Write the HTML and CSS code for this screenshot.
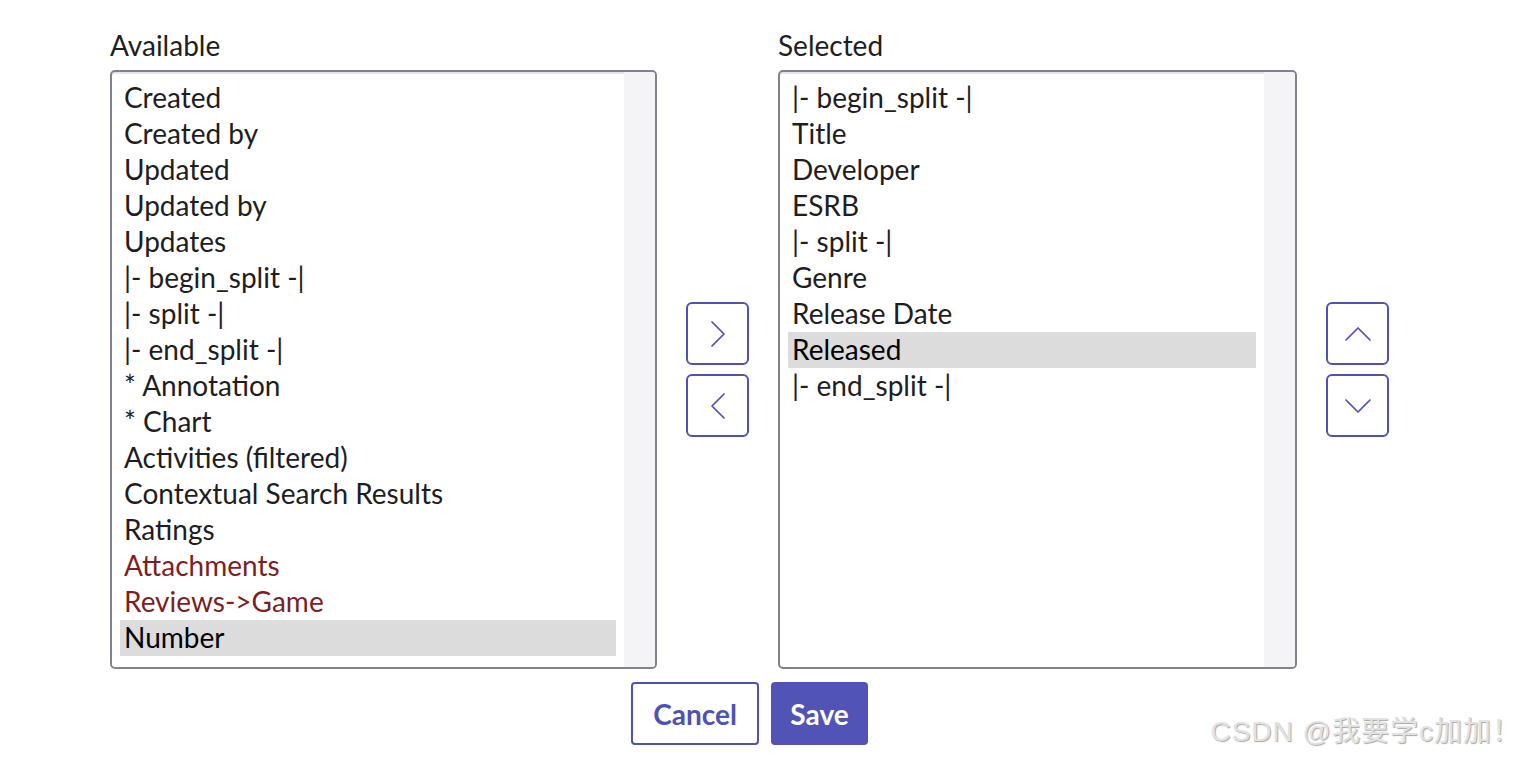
FILE: index.html
```html
<!DOCTYPE html>
<html>
<head>
<meta charset="utf-8">
<link rel="stylesheet" href="styles.css">
</head>
<body>
<div class="page">
  <div class="editor">
    <div class="column">
      <div class="label">Available</div>
      <div class="listbox">
        <div class="options">
          <div class="opt">Created</div>
          <div class="opt">Created by</div>
          <div class="opt">Updated</div>
          <div class="opt">Updated by</div>
          <div class="opt">Updates</div>
          <div class="opt">|- begin_split -|</div>
          <div class="opt">|- split -|</div>
          <div class="opt">|- end_split -|</div>
          <div class="opt">* Annotation</div>
          <div class="opt">* Chart</div>
          <div class="opt">Activities (filtered)</div>
          <div class="opt">Contextual Search Results</div>
          <div class="opt">Ratings</div>
          <div class="opt ref">Attachments</div>
          <div class="opt ref">Reviews-&gt;Game</div>
          <div class="opt sel">Number</div>
        </div>
        <div class="track"></div>
      </div>
    </div>
    <div class="arrows">
      <button class="icon-btn"><svg viewBox="0 0 30 30"><path d="M9 3l12 12-12 12" fill="none" stroke="#4f52b5" stroke-width="1.7" stroke-linecap="round" stroke-linejoin="round"/></svg></button>
      <button class="icon-btn"><svg viewBox="0 0 30 30"><path d="M21 3l-12 12 12 12" fill="none" stroke="#4f52b5" stroke-width="1.7" stroke-linecap="round" stroke-linejoin="round"/></svg></button>
    </div>
    <div class="column">
      <div class="label">Selected</div>
      <div class="listbox right">
        <div class="options">
          <div class="opt">|- begin_split -|</div>
          <div class="opt">Title</div>
          <div class="opt">Developer</div>
          <div class="opt">ESRB</div>
          <div class="opt">|- split -|</div>
          <div class="opt">Genre</div>
          <div class="opt">Release Date</div>
          <div class="opt sel">Released</div>
          <div class="opt">|- end_split -|</div>
        </div>
        <div class="track"></div>
      </div>
    </div>
    <div class="arrows">
      <button class="icon-btn"><svg viewBox="0 0 30 30"><path d="M3 21l12-12 12 12" fill="none" stroke="#4f52b5" stroke-width="1.7" stroke-linecap="round" stroke-linejoin="round"/></svg></button>
      <button class="icon-btn"><svg viewBox="0 0 30 30"><path d="M3 9l12 12 12-12" fill="none" stroke="#4f52b5" stroke-width="1.7" stroke-linecap="round" stroke-linejoin="round"/></svg></button>
    </div>
  </div>
  <div class="actions">
    <button class="btn cancel">Cancel</button>
    <button class="btn save">Save</button>
  </div>
  <div class="watermark">CSDN @我要学c加加！</div>
</div>
</body>
</html>
```

FILE: styles.css
```css
html, body {
  margin: 0;
  padding: 0;
  background: #ffffff;
}
body {
  font-family: Lato, "Noto Sans", sans-serif;
  color: #1d1d22;
  width: 1522px;
  height: 758px;
}
.page {
  position: relative;
  padding: 27px 0 0 110px;
  height: 731px;
}
.editor {
  display: flex;
  align-items: flex-start;
  gap: 29px;
}
.column {
  display: flex;
  flex-direction: column;
}
.label {
  font-size: 28px;
  line-height: 36px;
  margin-bottom: 7px;
  color: #1d1d22;
}
.listbox {
  box-sizing: border-box;
  width: 547px;
  height: 599px;
  border: 2px solid #80838f;
  border-radius: 5px;
  display: flex;
  background: #fff;
  overflow: hidden;
  box-shadow: inset 0 2px 0 #e6e6ea;
}
.listbox.right {
  width: 519px;
}
.options {
  flex: 1;
  padding: 8px 8px 0 8px;
}
.opt {
  font-size: 28px;
  line-height: 34px;
  padding: 0 0 2px 4px;
  white-space: nowrap;
  color: #1d1d22;
}
.opt.ref {
  color: #7b1f24;
}
.opt.sel {
  background: #dcdcdc;
  color: #000;
}
.track {
  width: 31px;
  background: #f4f4f7;
}
.arrows {
  display: flex;
  flex-direction: column;
  gap: 9px;
  margin-top: 275px;
}
.icon-btn {
  box-sizing: border-box;
  width: 63px;
  height: 63px;
  border: 2px solid #4f52b5;
  border-radius: 6px;
  background: #fff;
  display: flex;
  align-items: center;
  justify-content: center;
  padding: 0;
}
.icon-btn svg {
  width: 30px;
  height: 30px;
}
.actions {
  display: flex;
  justify-content: flex-start;
  gap: 12px;
  margin: 13px 0 0 521px;
}
.btn {
  box-sizing: border-box;
  height: 63px;
  border-radius: 4px;
  font-family: Lato, sans-serif;
  font-weight: 700;
  font-size: 28px;
  padding: 0;
}
.cancel {
  width: 128px;
  border: 2px solid #4f52b5;
  background: #fff;
  color: #4f52b5;
}
.save {
  width: 97px;
  border: 2px solid #5153b5;
  background: #5153b5;
  color: #fff;
}
.watermark {
  position: absolute;
  right: 1px;
  top: 713px;
  font-family: "Liberation Sans", "Noto Sans CJK SC", sans-serif;
  font-size: 28px;
  line-height: 38px;
  letter-spacing: 1px;
  color: #e2e2e2;
  text-shadow: 1px 1px 1px #a8a8a8;
  white-space: nowrap;
}
```
